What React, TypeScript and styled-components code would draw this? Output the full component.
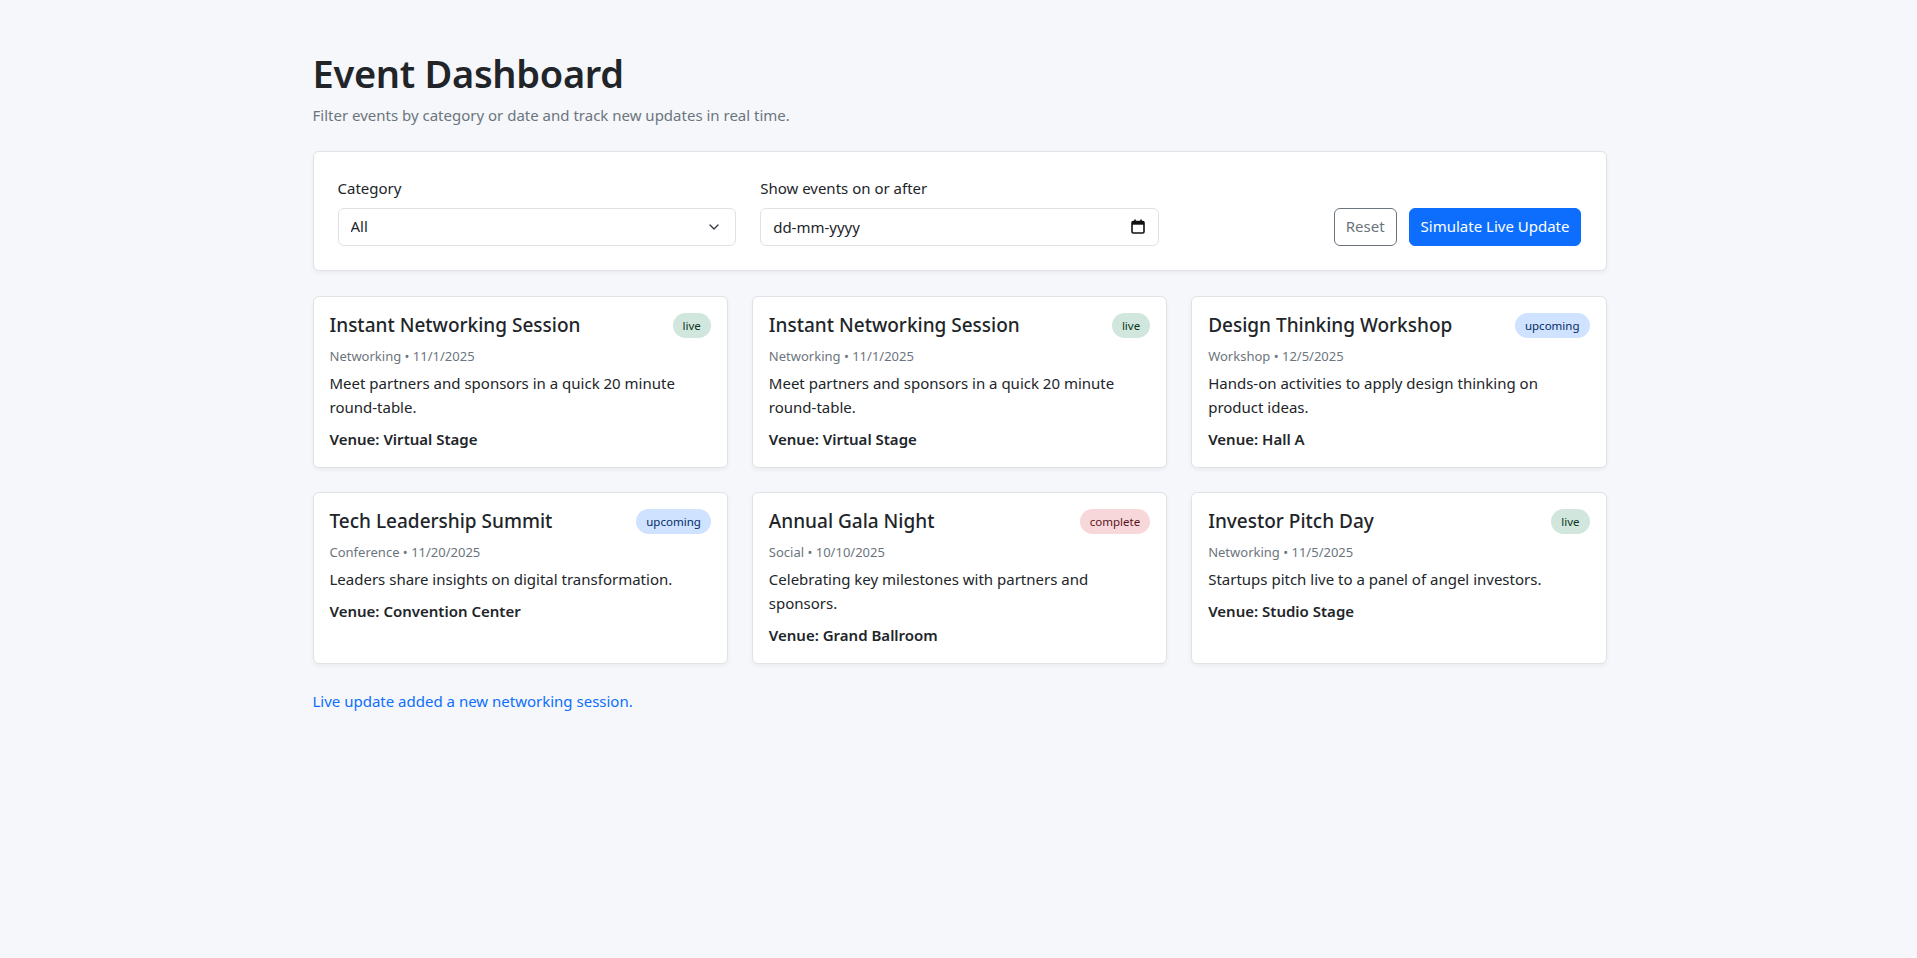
import { useState } from 'react';
import styled, { createGlobalStyle } from 'styled-components';
import { ChevronDown } from 'lucide-react';

const GlobalStyle = createGlobalStyle`
  * {
    box-sizing: border-box;
  }
  body {
    margin: 0;
    background: #f5f7fb;
    color: #212529;
    font-family: "Noto Sans", "Open Sans", "Liberation Sans", sans-serif;
    font-size: 16px;
    line-height: 1.5;
  }
`;

const Page = styled.main`
  max-width: 1320px;
  margin: 0 auto;
  padding: 50px 12px 48px 14px;
`;

const Title = styled.h1`
  margin: 0 0 8px;
  font-size: 38px;
  font-weight: 600;
  line-height: 46px;
  letter-spacing: -0.3px;
`;

const Subtitle = styled.p`
  margin: 0 0 24px;
  color: #6c757d;
  font-size: 15px;
`;

const Panel = styled.section`
  background: #fff;
  border: 1px solid #dfe2e7;
  border-radius: 6px;
  box-shadow: 0 2px 4px rgba(0, 0, 0, 0.05);
`;

const FilterPanel = styled(Panel)`
  display: grid;
  grid-template-columns: repeat(3, 1fr);
  gap: 24px;
  padding: 24px;
  margin-bottom: 25px;
`;

const Field = styled.div`
  display: flex;
  flex-direction: column;
`;

const Label = styled.label`
  margin-bottom: 8px;
  font-size: 15px;
  line-height: 24px;
`;

const InputWrap = styled.div`
  position: relative;
  display: flex;
  align-items: center;
`;

const Select = styled.select`
  appearance: none;
  width: 100%;
  height: 38px;
  padding: 6px 36px 6px 12px;
  border: 1px solid #dee2e6;
  border-radius: 6px;
  background: #fff;
  color: #212529;
  font: inherit;
  font-size: 15px;
`;

const TextInput = styled.input`
  width: 100%;
  height: 38px;
  padding: 6px 36px 6px 12px;
  border: 1px solid #dee2e6;
  border-radius: 6px;
  background: #fff;
  color: #212529;
  font: inherit;
  font-size: 15px;

  &::placeholder {
    color: #212529;
  }
`;

const FieldIcon = styled.span`
  position: absolute;
  right: 14px;
  display: flex;
  pointer-events: none;
  color: #343a40;
`;

const Actions = styled.div`
  display: flex;
  justify-content: flex-end;
  align-items: flex-end;
  gap: 12px;
`;

const Button = styled.button<{ $primary?: boolean }>`
  height: 38px;
  padding: 6px 11px;
  border-radius: 6px;
  border: 1px solid ${({ $primary }) => ($primary ? '#0d6efd' : '#6c757d')};
  background: ${({ $primary }) => ($primary ? '#0d6efd' : 'transparent')};
  color: ${({ $primary }) => ($primary ? '#fff' : '#6c757d')};
  font: inherit;
  font-size: 15px;
  cursor: pointer;
`;

const CardGrid = styled.div`
  display: grid;
  grid-template-columns: repeat(3, 1fr);
  gap: 24px;
`;

const Card = styled(Panel)`
  padding: 16px;
`;

const CardHead = styled.div`
  display: flex;
  justify-content: space-between;
  align-items: flex-start;
  gap: 8px;
  margin-bottom: 8px;
`;

const CardTitle = styled.h5`
  margin: 0;
  font-size: 19px;
  font-weight: 500;
  line-height: 24px;
`;

const badgeColors = {
  live: { bg: '#d1e7dd', fg: '#0a3622' },
  upcoming: { bg: '#cfe2ff', fg: '#052c65' },
  complete: { bg: '#f8d7da', fg: '#58151c' },
};

type Status = keyof typeof badgeColors;

const Badge = styled.span<{ $status: Status }>`
  flex-shrink: 0;
  padding: 6px 10px;
  border-radius: 999px;
  background: ${({ $status }) => badgeColors[$status].bg};
  color: ${({ $status }) => badgeColors[$status].fg};
  font-size: 11.5px;
  line-height: 13px;
`;

const Meta = styled.p`
  margin: 0 0 5px;
  color: #6c757d;
  font-size: 13px;
  line-height: 20px;
`;

const Description = styled.p`
  margin: 0 0 8px;
  font-size: 15px;
  line-height: 24px;
`;

const Venue = styled.p`
  margin: 0;
  font-size: 15px;
  font-weight: 600;
  line-height: 24px;
`;

const Notice = styled.p`
  margin: 26px 0 0;
  color: #0d6efd;
  font-size: 15px;
`;

const CalendarIcon = () => (
  <svg width="14" height="15" viewBox="0 0 14 15" fill="none">
    <rect x="1" y="2.5" width="12" height="11.5" rx="1.2" stroke="#111" strokeWidth="1.6" />
    <rect x="1" y="2.5" width="12" height="3.2" fill="#111" />
    <rect x="3.2" y="0.5" width="1.6" height="3" fill="#111" />
    <rect x="9.2" y="0.5" width="1.6" height="3" fill="#111" />
  </svg>
);

interface EventItem {
  id: number;
  title: string;
  category: string;
  date: string;
  status: Status;
  description: string;
  venue: string;
}

const initialEvents: EventItem[] = [
  {
    id: 7,
    title: 'Instant Networking Session',
    category: 'Networking',
    date: '11/1/2025',
    status: 'live',
    description: 'Meet partners and sponsors in a quick 20 minute round-table.',
    venue: 'Virtual Stage',
  },
  {
    id: 6,
    title: 'Instant Networking Session',
    category: 'Networking',
    date: '11/1/2025',
    status: 'live',
    description: 'Meet partners and sponsors in a quick 20 minute round-table.',
    venue: 'Virtual Stage',
  },
  {
    id: 1,
    title: 'Design Thinking Workshop',
    category: 'Workshop',
    date: '12/5/2025',
    status: 'upcoming',
    description: 'Hands-on activities to apply design thinking on product ideas.',
    venue: 'Hall A',
  },
  {
    id: 2,
    title: 'Tech Leadership Summit',
    category: 'Conference',
    date: '11/20/2025',
    status: 'upcoming',
    description: 'Leaders share insights on digital transformation.',
    venue: 'Convention Center',
  },
  {
    id: 3,
    title: 'Annual Gala Night',
    category: 'Social',
    date: '10/10/2025',
    status: 'complete',
    description: 'Celebrating key milestones with partners and sponsors.',
    venue: 'Grand Ballroom',
  },
  {
    id: 4,
    title: 'Investor Pitch Day',
    category: 'Networking',
    date: '11/5/2025',
    status: 'live',
    description: 'Startups pitch live to a panel of angel investors.',
    venue: 'Studio Stage',
  },
];

const categories = ['All', 'Networking', 'Workshop', 'Conference', 'Social'];

const App = () => {
  const [events, setEvents] = useState(initialEvents);
  const [category, setCategory] = useState('All');
  const [after, setAfter] = useState('');
  const [notice, setNotice] = useState('Live update added a new networking session.');

  const visible = events.filter((ev) => {
    if (category !== 'All' && ev.category !== category) return false;
    if (after && new Date(ev.date) < new Date(after)) return false;
    return true;
  });

  const simulate = () => {
    setEvents((prev) => [{ ...initialEvents[0], id: Date.now() }, ...prev]);
    setNotice('Live update added a new networking session.');
  };

  const reset = () => {
    setCategory('All');
    setAfter('');
  };

  return (
    <>
      <GlobalStyle />
      <Page>
        <Title>Event Dashboard</Title>
        <Subtitle>Filter events by category or date and track new updates in real time.</Subtitle>

        <FilterPanel>
          <Field>
            <Label htmlFor="category">Category</Label>
            <InputWrap>
              <Select id="category" value={category} onChange={(e) => setCategory(e.target.value)}>
                {categories.map((c) => (
                  <option key={c}>{c}</option>
                ))}
              </Select>
              <FieldIcon>
                <ChevronDown size={16} strokeWidth={2} />
              </FieldIcon>
            </InputWrap>
          </Field>
          <Field>
            <Label htmlFor="after">Show events on or after</Label>
            <InputWrap>
              <TextInput
                id="after"
                placeholder="dd-mm-yyyy"
                value={after}
                onChange={(e) => setAfter(e.target.value)}
              />
              <FieldIcon>
                <CalendarIcon />
              </FieldIcon>
            </InputWrap>
          </Field>
          <Actions>
            <Button onClick={reset}>Reset</Button>
            <Button $primary onClick={simulate}>
              Simulate Live Update
            </Button>
          </Actions>
        </FilterPanel>

        <CardGrid>
          {visible.map((ev) => (
            <Card key={ev.id}>
              <CardHead>
                <CardTitle>{ev.title}</CardTitle>
                <Badge $status={ev.status}>{ev.status}</Badge>
              </CardHead>
              <Meta>
                {ev.category} • {ev.date}
              </Meta>
              <Description>{ev.description}</Description>
              <Venue>Venue: {ev.venue}</Venue>
            </Card>
          ))}
        </CardGrid>

        {notice && <Notice>{notice}</Notice>}
      </Page>
    </>
  );
};

export default App;
